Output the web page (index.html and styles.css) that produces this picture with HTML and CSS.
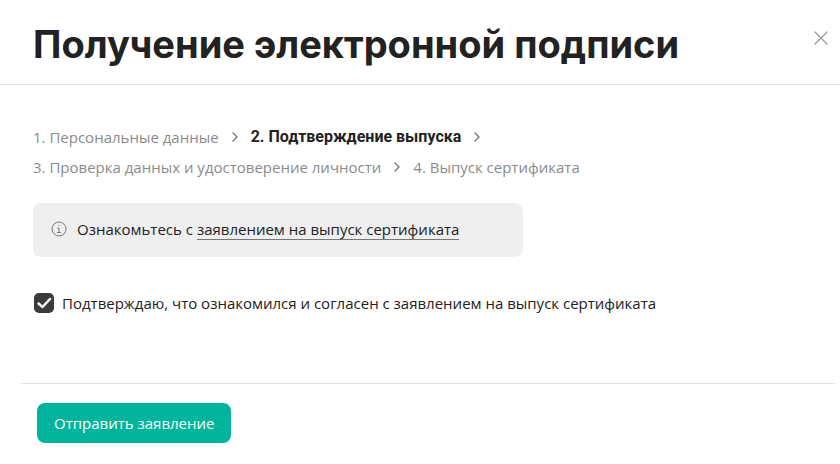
FILE: index.html
```html
<!DOCTYPE html>
<html lang="ru">

<head>
    <meta charset="UTF-8">
    <meta name="viewport" content="width=device-width, initial-scale=1.0">
    <title>Получение электронной подписи</title>
    <link rel="stylesheet" href="styles.css">
</head>

<body>
    <header class="header">
        <h1 class="title">Получение электронной подписи</h1>
        <button class="close" type="button" aria-label="Закрыть">
            <svg width="14" height="14" viewBox="0 0 14 14" fill="none" stroke="currentColor" stroke-width="1.3" stroke-linecap="round">
                <path d="M1 1l12 12M13 1L1 13" />
            </svg>
        </button>
    </header>

    <form class="form">
        <main class="content">
            <ol class="steps">
                <li class="step">1. Персональные данные
                    <svg class="arrow" viewBox="0 0 8 12"><path d="M1.5 1.5L6 6l-4.5 4.5" /></svg>
                </li>
                <li class="step active" aria-current="step">2. Подтверждение выпуска
                    <svg class="arrow" viewBox="0 0 8 12"><path d="M1.5 1.5L6 6l-4.5 4.5" /></svg>
                </li>
                <li class="step">3. Проверка данных и удостоверение личности
                    <svg class="arrow" viewBox="0 0 8 12"><path d="M1.5 1.5L6 6l-4.5 4.5" /></svg>
                </li>
                <li class="step">4. Выпуск сертификата</li>
            </ol>

            <div class="notice">
                <svg class="info" width="16" height="16" viewBox="0 0 16 16" fill="none" stroke="currentColor">
                    <circle cx="8" cy="8" r="7" />
                    <path d="M6.5 7H8v4.5M6 11.5h4M7.5 4.5h1" />
                </svg>
                <p>Ознакомьтесь с <a class="link" href="#">заявлением на выпуск сертификата</a></p>
            </div>

            <div class="agree">
                <input class="checkbox" type="checkbox" id="agree" checked>
                <label for="agree">Подтверждаю, что ознакомился и согласен с заявлением на выпуск сертификата</label>
            </div>
        </main>

        <footer class="footer">
            <button class="submit" type="submit">Отправить заявление</button>
        </footer>
    </form>
</body>

</html>
```

FILE: styles.css
```css
* {
    box-sizing: border-box;
}

body {
    margin: 0;
    background: #fff;
    color: #222;
    font-family: "Open Sans", "Liberation Sans", sans-serif;
    font-size: 15px;
    line-height: 24px;
}

h1,
p,
ol {
    margin: 0;
    padding: 0;
}

button {
    border: 0;
    font: inherit;
    cursor: pointer;
}

/* Header */
.header {
    display: flex;
    justify-content: space-between;
    align-items: flex-start;
    padding: 20px 12px 16px 33px;
    border-bottom: 1px solid #e3e3e3;
}

.title {
    font-family: Inter, "Liberation Sans", sans-serif;
    font-size: 38px;
    font-weight: 650;
    line-height: 48px;
}

.close {
    display: flex;
    margin-top: 11px;
    padding: 0;
    background: none;
    color: #999;
}

/* Steps */
.content {
    padding: 40px 33px 68px;
}

.steps {
    display: flex;
    flex-wrap: wrap;
    gap: 6px 12px;
    list-style: none;
}

.step {
    display: flex;
    align-items: center;
    gap: 12px;
    color: #8b8b8b;
}

.active {
    color: #222;
    font-family: Roboto, "Liberation Sans", sans-serif;
    font-size: 16px;
    font-weight: 700;
}

.arrow {
    width: 8px;
    height: 12px;
    fill: none;
    stroke: #777;
    stroke-width: 1.3;
}

/* Notice */
.notice {
    display: flex;
    align-items: center;
    gap: 10px;
    max-width: 490px;
    margin-top: 24px;
    padding: 14px 18px 16px;
    border-radius: 8px;
    background: #efefef;
}

.info {
    color: #777;
}

.link {
    border-bottom: 1px solid #777;
    color: inherit;
    text-decoration: none;
}

/* Checkbox */
.agree {
    display: flex;
    align-items: center;
    gap: 8px;
    margin-top: 34px;
}

.checkbox {
    flex: none;
    width: 20px;
    height: 20px;
    margin: 0 0 0 1px;
    border-radius: 5px;
    background: #3b3b3b;
    appearance: none;
}

.checkbox:checked {
    background-image: url("data:image/svg+xml,%3Csvg xmlns='http://www.w3.org/2000/svg' viewBox='0 0 20 20' fill='none' stroke='white' stroke-width='2.5' stroke-linecap='round' stroke-linejoin='round'%3E%3Cpath d='M4.5 10.5l4 3.5 7.5-8'/%3E%3C/svg%3E");
}

/* Footer */
.footer {
    margin: 0 5px 0 21px;
    padding: 19px 16px;
    border-top: 1px solid #e3e3e3;
}

.submit {
    height: 40px;
    padding: 0 17px;
    border-radius: 8px;
    background: #00b59b;
    color: #fff;
    font-weight: 500;
}
```
